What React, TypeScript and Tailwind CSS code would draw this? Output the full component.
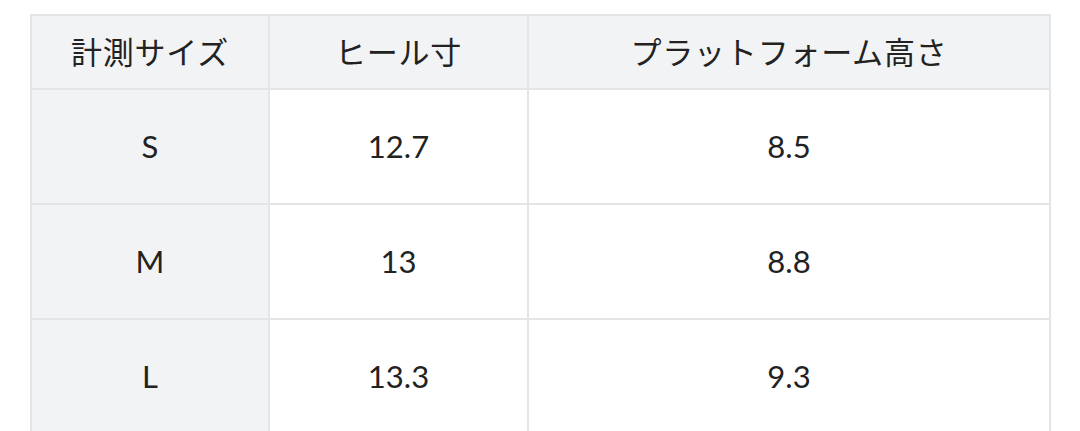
const rows = [
  ['S', '12.7', '8.5'],
  ['M', '13', '8.8'],
  ['L', '13.3', '9.3'],
];

export default function App() {
  return (
    <div className="h-[431px] overflow-hidden bg-white pt-[14px] pl-[30px]">
      <table
        className="table-fixed border-collapse text-[31px] text-[#222]"
        style={{ fontFamily: 'Lato, "Noto Sans CJK JP", sans-serif' }}
      >
        <colgroup>
          <col className="w-[238px]" />
          <col className="w-[259px]" />
          <col className="w-[522px]" />
        </colgroup>
        <thead>
          <tr className="h-[74px] bg-[#f2f3f5] tracking-[0.8px]">
            <th className="border-2 border-[#e4e5e7] font-normal">計測サイズ</th>
            <th className="border-2 border-[#e4e5e7] font-normal">ヒール寸</th>
            <th className="border-2 border-[#e4e5e7] font-normal">プラットフォーム高さ</th>
          </tr>
        </thead>
        <tbody>
          {rows.map((r) => (
            <tr key={r[0]} className="h-[115px]">
              <td className="border-2 border-[#e4e5e7] bg-[#f2f3f5] text-center">{r[0]}</td>
              <td className="border-2 border-[#e4e5e7] text-center">{r[1]}</td>
              <td className="border-2 border-[#e4e5e7] text-center">{r[2]}</td>
            </tr>
          ))}
        </tbody>
      </table>
    </div>
  );
}
